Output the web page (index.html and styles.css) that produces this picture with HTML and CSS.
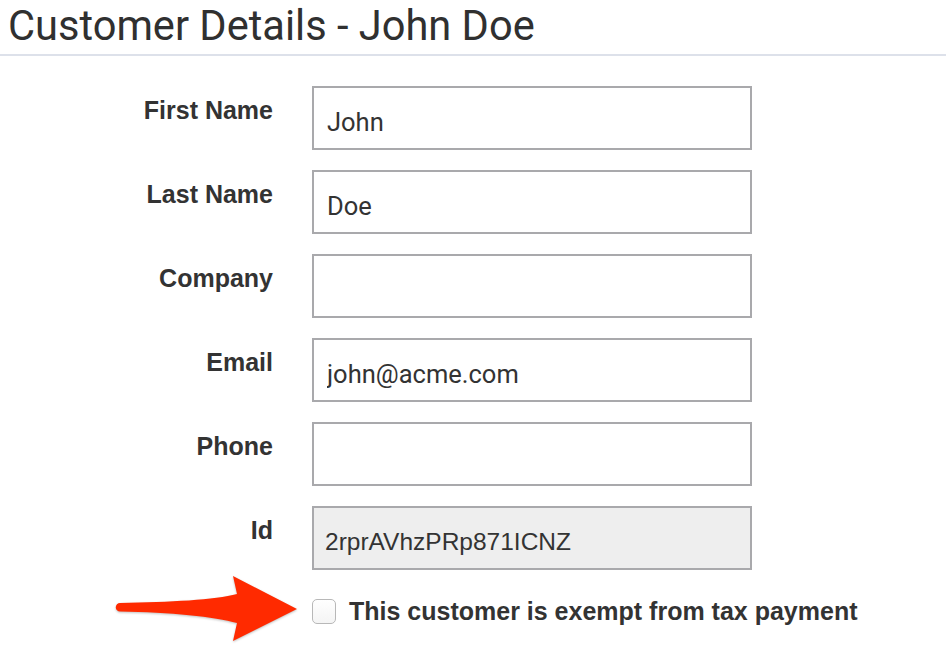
FILE: index.html
```html
<!DOCTYPE html>
<html lang="en">
<head>
<meta charset="utf-8">
<title>Customer Details - John Doe</title>
<link rel="stylesheet" href="styles.css">
</head>
<body>
<div class="page">
  <h1 class="title">Customer Details - John Doe</h1>
  <form class="form">
    <label class="label" for="first">First Name</label>
    <input class="field" id="first" type="text" value="John">
    <label class="label" for="last">Last Name</label>
    <input class="field" id="last" type="text" value="Doe">
    <label class="label" for="company">Company</label>
    <input class="field" id="company" type="text" value="">
    <label class="label" for="email">Email</label>
    <input class="field" id="email" type="text" value="john@acme.com">
    <label class="label" for="phone">Phone</label>
    <input class="field" id="phone" type="text" value="">
    <label class="label" for="cid">Id</label>
    <input class="field field-disabled" id="cid" type="text" value="2rprAVhzPRp871ICNZ" disabled>
    <div class="check-row">
      <input class="check" id="exempt" type="checkbox">
      <label class="check-label" for="exempt">This customer is exempt from tax payment</label>
    </div>
  </form>
  <svg class="arrow" viewBox="100 570 210 80" width="210" height="80" aria-hidden="true">
    <path d="M237 594 L233 576 L297 609 L233 641 L237 623 C215 617 170 612 120 611.5 A4.2 4.2 0 0 1 120 603 C170 602 215 600 237 594 Z" fill="#ff2a00"/>
  </svg>
</div>
</body>
</html>
```
FILE: styles.css
```css
html, body {
  margin: 0;
  padding: 0;
  background: #ffffff;
}

.page {
  position: relative;
  width: 946px;
  height: 650px;
  overflow: hidden;
  color: #333333;
}

.title {
  margin: 0;
  padding: 1px 8px 4px 8px;
  font-family: Roboto, "Liberation Sans", sans-serif;
  font-weight: 400;
  font-size: 41.6px;
  line-height: 49px;
  color: #303030;
  border-bottom: 2px solid #dde1ea;
}

.form {
  display: grid;
  grid-template-columns: 265px 440px;
  column-gap: 39px;
  row-gap: 20px;
  margin: 30px 0 0 8px;
}

.label {
  padding-top: 9px;
  text-align: right;
  font-family: "Liberation Sans", Arial, sans-serif;
  font-weight: 700;
  font-size: 25px;
  line-height: 30px;
  color: #333333;
}

.field {
  box-sizing: border-box;
  width: 440px;
  height: 64px;
  margin: 0;
  padding: 8px 13px 0 13px;
  border: 2px solid #a9a9ac;
  border-radius: 0;
  background: #ffffff;
  font-family: Roboto, "Liberation Sans", sans-serif;
  font-size: 25.5px;
  color: #333333;
  outline: none;
}

.field-disabled {
  background: #eeeeee;
  padding-left: 11px;
  font-family: "Liberation Sans", Arial, sans-serif;
  font-size: 24.5px;
  color: #333333;
  -webkit-text-fill-color: #333333;
  opacity: 1;
}

.check-row {
  grid-column: 2;
  display: flex;
  align-items: center;
  gap: 13px;
  margin-top: 6px;
  width: 600px;
}

.check {
  appearance: none;
  -webkit-appearance: none;
  box-sizing: border-box;
  width: 24px;
  height: 25px;
  margin: 0;
  border: 1px solid #b8b8b8;
  border-radius: 5px;
  background: linear-gradient(#ffffff, #f4f4f4);
  flex: none;
}

.check-label {
  font-family: "Liberation Sans", Arial, sans-serif;
  font-weight: 700;
  font-size: 25px;
  line-height: 30px;
  color: #333333;
  white-space: nowrap;
}

.arrow {
  position: absolute;
  left: 100px;
  top: 570px;
  filter: drop-shadow(0 1px 1px rgba(0, 0, 0, 0.25));
}
```
